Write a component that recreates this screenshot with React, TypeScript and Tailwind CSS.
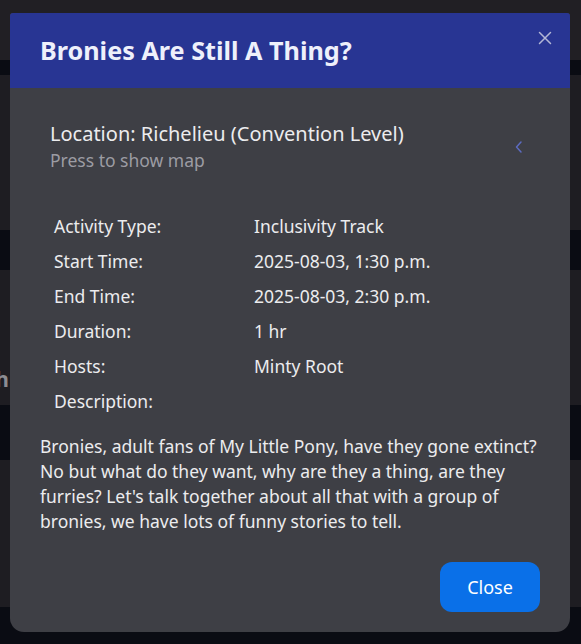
import React from 'react';

const rows: [string, string][] = [
  ['Activity Type:', 'Inclusivity Track'],
  ['Start Time:', '2025-08-03, 1:30 p.m.'],
  ['End Time:', '2025-08-03, 2:30 p.m.'],
  ['Duration:', '1 hr'],
  ['Hosts:', 'Minty Root'],
  ['Description:', ''],
];

const App: React.FC = () => {
  return (
    <div
      className="relative w-[581px] h-[644px] overflow-hidden bg-[#0a0c13]"
      style={{ fontFamily: '"Noto Sans", "Open Sans", sans-serif' }}
    >
      {/* page behind the backdrop */}
      <div className="flex flex-col">
        <div className="h-[60px] bg-[#211f24]" />
        <div className="h-[155px] mt-[15px] bg-[#1e1d22]" />
        <div className="h-[135px] mt-[40px] bg-[#1e1d22] flex items-end pb-[10px]">
          <div className="w-[9px] overflow-hidden flex justify-end">
            <span className="whitespace-nowrap text-[21px] font-bold text-[#8c8c92]">Lunch</span>
          </div>
        </div>
        <div className="h-[147px] mt-[55px] bg-[#1e1d22]" />
      </div>

      {/* modal */}
      <div className="absolute left-[10px] top-[13px] w-[560px] h-[619px] rounded-t-[3px] rounded-b-[14px] overflow-hidden bg-[#3e3f45] flex flex-col">
        <div className="relative h-[75px] shrink-0 bg-[#283593] flex items-center px-[30px]">
          <h2 className="text-[25.2px] font-bold text-[#eef0fb]">Bronies Are Still A Thing?</h2>
          <button className="absolute right-[16px] top-[16px] text-[#b3b7d6]">
            <svg width="18" height="18" viewBox="0 0 18 18" fill="none" stroke="currentColor" strokeWidth="1.5" strokeLinecap="round">
              <path d="M3.5 3.5l11 11M14.5 3.5l-11 11" />
            </svg>
          </button>
        </div>

        <div className="flex-1 flex flex-col px-[30px] pt-[33px]">
          <div className="flex items-center justify-between pl-[10px] pr-[16px]">
            <div className="flex flex-col">
              <span className="text-[20px] leading-[26px] text-[#ececee]">Location: Richelieu (Convention Level)</span>
              <span className="text-[17.5px] leading-[24px] mt-[1px] text-[#9c9ca3]">Press to show map</span>
            </div>
            <svg width="10" height="14" viewBox="0 0 10 14" fill="none" stroke="#5c6bc0" strokeWidth="1.5" strokeLinecap="round" strokeLinejoin="round">
              <path d="M7 2L2.5 7L7 12" />
            </svg>
          </div>

          <table className="mt-[37px] ml-[10px] text-[17.5px] text-[#ececee] border-collapse">
            <tbody>
              {rows.map(([label, value]) => (
                <tr key={label} className="h-[35px]">
                  <td className="w-[200px] px-[4px] align-middle">{label}</td>
                  <td className="px-[4px] align-middle">{value}</td>
                </tr>
              ))}
            </tbody>
          </table>

          <p className="mt-[15px] text-[17.5px] leading-[25px] text-[#ececee]">
            Bronies, adult fans of My Little Pony, have they gone extinct? No but what do they want, why are they a thing, are they furries? Let's talk together about all that with a group of bronies, we have lots of funny stories to tell.
          </p>

          <div className="flex justify-end mt-[28px]">
            <button className="w-[100px] h-[50px] rounded-[12px] bg-[#0a70e8] text-white text-[18px]">Close</button>
          </div>
        </div>
      </div>
    </div>
  );
};

export default App;
